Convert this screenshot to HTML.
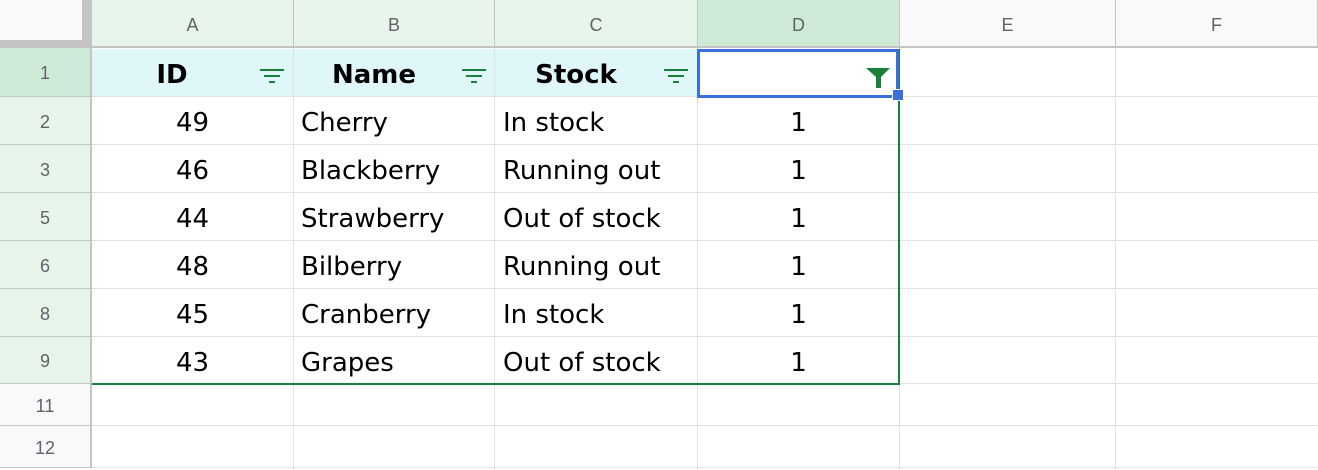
<!DOCTYPE html><html><head><style>
body{margin:0;width:1318px;height:470px;overflow:hidden;background:#fff;font-family:"Liberation Sans",sans-serif;position:relative}
div{position:absolute;box-sizing:border-box}
.vl{width:1px;background:#e2e2e2;top:48px;height:422px}
.hl{height:1px;background:#e2e2e2;left:92px;width:1226px}
.ch{top:0;height:48px;background:#f8f9fa;border-right:1px solid #c4c4c4;border-bottom:2px solid #c4c4c4;color:#5f6368;font-size:18px;text-align:center;line-height:50px}
.rh{left:0;width:92px;background:#f8f9fa;border-right:2px solid #c4c4c4;border-bottom:1px solid #c4c4c4;color:#5f6368;font-size:18px;text-align:center}
.g{background:#e6f4ea}
.c{font-size:26px;color:#000;height:48px;line-height:52px;font-family:"DejaVu Sans",sans-serif;white-space:nowrap}
</style></head><body>
<div style="left:92px;top:49px;width:605px;height:48px;background:#e0f7fa"></div>
<div style="left:0;top:0;width:92px;height:48px;background:#c4c4c4"></div>
<div style="left:0;top:0;width:82px;height:40px;background:#f8f9fa"></div>
<div class="ch g" style="left:92px;width:202px">A</div>
<div class="ch g" style="left:294px;width:201px">B</div>
<div class="ch g" style="left:495px;width:203px">C</div>
<div class="ch" style="left:698px;width:202px;background:#ceead6">D</div>
<div class="ch" style="left:900px;width:216px">E</div>
<div class="ch" style="left:1116px;width:202px">F</div>
<div class="vl" style="left:293px"></div><div class="vl" style="left:494px"></div><div class="vl" style="left:697px"></div><div class="vl" style="left:899px"></div><div class="vl" style="left:1115px"></div>
<div class="hl" style="top:96px"></div><div class="hl" style="top:144px"></div><div class="hl" style="top:192px"></div><div class="hl" style="top:240px"></div><div class="hl" style="top:288px"></div><div class="hl" style="top:336px"></div><div class="hl" style="top:383px"></div><div class="hl" style="top:425px"></div><div class="hl" style="top:467px"></div>
<div class="rh" style="top:48px;height:49px;line-height:50px;background:#ceead6">1</div>
<div class="rh g" style="top:97px;height:48px;line-height:50px">2</div>
<div class="rh g" style="top:145px;height:48px;line-height:50px">3</div>
<div class="rh g" style="top:193px;height:48px;line-height:50px">5</div>
<div class="rh g" style="top:241px;height:48px;line-height:50px">6</div>
<div class="rh g" style="top:289px;height:48px;line-height:50px">8</div>
<div class="rh g" style="top:337px;height:47px;line-height:49px">9</div>
<div class="rh" style="top:384px;height:42px;line-height:44px">11</div>
<div class="rh" style="top:426px;height:42px;line-height:44px">12</div>
<div class="c" style="left:92px;top:49px;width:160px;text-align:center;font-weight:bold">ID</div>
<div class="c" style="left:294px;top:49px;width:160px;text-align:center;font-weight:bold">Name</div>
<div class="c" style="left:495px;top:49px;width:162px;text-align:center;font-weight:bold">Stock</div>
<svg style="position:absolute;left:259px;top:68px" width="26" height="16"><path d="M1 2h24M5 8h16M10 14h6" stroke="#188038" stroke-width="2"/></svg>
<svg style="position:absolute;left:461px;top:68px" width="26" height="16"><path d="M1 2h24M5 8h16M10 14h6" stroke="#188038" stroke-width="2"/></svg>
<svg style="position:absolute;left:663px;top:68px" width="26" height="16"><path d="M1 2h24M5 8h16M10 14h6" stroke="#188038" stroke-width="2"/></svg>
<svg style="position:absolute;left:866px;top:67px" width="24" height="22"><path d="M0 1h24L15 10v11h-5V10z" fill="#188038"/></svg>
<div style="left:92px;top:49px;width:808px;height:336px;border-right:2px solid #188038;border-bottom:2px solid #188038"></div>
<div style="left:697px;top:49px;width:202px;height:49px;border:3px solid #3b6fe0"></div>
<div style="left:892px;top:89px;width:12px;height:12px;background:#3b6fe0;border:1px solid #fff"></div>
<div class="c" style="left:92px;top:97px;width:201px;text-align:center">49</div>
<div class="c" style="left:92px;top:145px;width:201px;text-align:center">46</div>
<div class="c" style="left:92px;top:193px;width:201px;text-align:center">44</div>
<div class="c" style="left:92px;top:241px;width:201px;text-align:center">48</div>
<div class="c" style="left:92px;top:289px;width:201px;text-align:center">45</div>
<div class="c" style="left:92px;top:337px;width:201px;text-align:center">43</div>
<div class="c" style="left:301px;top:97px">Cherry</div>
<div class="c" style="left:301px;top:145px">Blackberry</div>
<div class="c" style="left:301px;top:193px">Strawberry</div>
<div class="c" style="left:301px;top:241px">Bilberry</div>
<div class="c" style="left:301px;top:289px">Cranberry</div>
<div class="c" style="left:301px;top:337px">Grapes</div>
<div class="c" style="left:503px;top:97px">In stock</div>
<div class="c" style="left:503px;top:145px">Running out</div>
<div class="c" style="left:503px;top:193px">Out of stock</div>
<div class="c" style="left:503px;top:241px">Running out</div>
<div class="c" style="left:503px;top:289px">In stock</div>
<div class="c" style="left:503px;top:337px">Out of stock</div>
<div class="c" style="left:698px;top:97px;width:201px;text-align:center">1</div>
<div class="c" style="left:698px;top:145px;width:201px;text-align:center">1</div>
<div class="c" style="left:698px;top:193px;width:201px;text-align:center">1</div>
<div class="c" style="left:698px;top:241px;width:201px;text-align:center">1</div>
<div class="c" style="left:698px;top:289px;width:201px;text-align:center">1</div>
<div class="c" style="left:698px;top:337px;width:201px;text-align:center">1</div>
</body></html>
